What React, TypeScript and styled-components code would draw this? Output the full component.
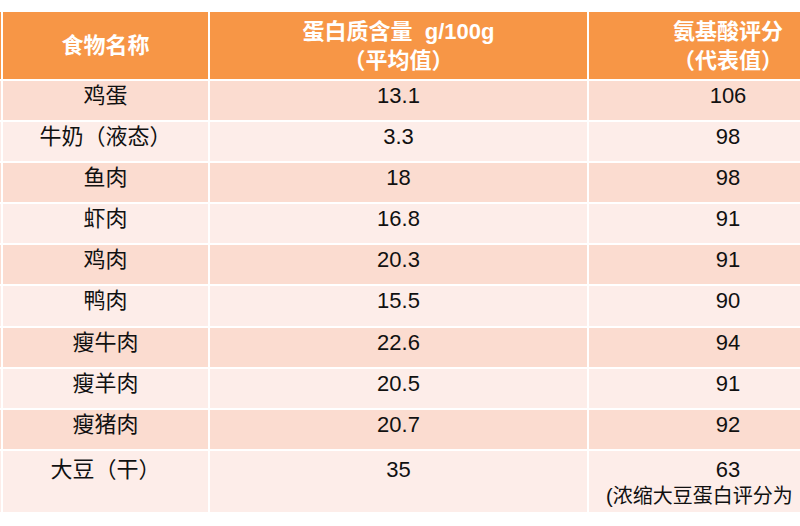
import React from "react";
import styled, { createGlobalStyle } from "styled-components";

const Global = createGlobalStyle`
  html, body { margin: 0; padding: 0; background: #ffffff; overflow: hidden; }
  body { width: 800px; height: 526px; }
`;

const Frame = styled.div`
  width: 800px;
  height: 526px;
  overflow: hidden;
  padding-top: 10px;
  box-sizing: border-box;
`;

const Table = styled.table`
  margin-left: -101px;
  border-collapse: separate;
  border-spacing: 2px;
  table-layout: fixed;
  width: 968px;
  background: #ffffff;
  font-family: "Liberation Sans", "Noto Sans CJK SC", sans-serif;
  font-size: 22px;
`;

const HeadCell = styled.th`
  height: 67px;
  padding: 0;
  background: #f79646;
  color: #ffffff;
  font-weight: 700;
  line-height: 29px;
  text-align: center;
  vertical-align: middle;
`;

const Cell = styled.td<{ $shade: boolean; $tall?: boolean }>`
  height: ${(p) => (p.$tall ? "61px" : "39.1px")};
  padding: ${(p) => (p.$tall ? "5px 0 0" : "1px 0 0")};
  box-sizing: border-box;
  background: ${(p) => (p.$shade ? "#fbdcd0" : "#fdede9")};
  color: #111111;
  line-height: 27px;
  text-align: center;
  vertical-align: top;
  white-space: nowrap;
  overflow: hidden;
`;

const Note = styled.div`
  text-align: left;
  padding-left: 17px;
  font-size: 20px;
`;

const rows: [string, string, string][] = [
  ["鸡蛋", "13.1", "106"],
  ["牛奶（液态）", "3.3", "98"],
  ["鱼肉", "18", "98"],
  ["虾肉", "16.8", "91"],
  ["鸡肉", "20.3", "91"],
  ["鸭肉", "15.5", "90"],
  ["瘦牛肉", "22.6", "94"],
  ["瘦羊肉", "20.5", "91"],
  ["瘦猪肉", "20.7", "92"],
];

export default function App() {
  return (
    <Frame>
      <Global />
      <Table>
        <colgroup>
          <col style={{ width: 100 }} />
          <col style={{ width: 205 }} />
          <col style={{ width: 377 }} />
          <col style={{ width: 278 }} />
        </colgroup>
        <thead>
          <tr>
            <HeadCell />
            <HeadCell>食物名称</HeadCell>
            <HeadCell>
              蛋白质含量&nbsp;&nbsp;g/100g
              <br />
              （平均值）
            </HeadCell>
            <HeadCell>
              氨基酸评分
              <br />
              （代表值）
            </HeadCell>
          </tr>
        </thead>
        <tbody>
          {rows.map((r, i) => (
            <tr key={r[0]}>
              <Cell $shade={i % 2 === 0} />
              <Cell $shade={i % 2 === 0}>{r[0]}</Cell>
              <Cell $shade={i % 2 === 0}>{r[1]}</Cell>
              <Cell $shade={i % 2 === 0}>{r[2]}</Cell>
            </tr>
          ))}
          <tr>
            <Cell $shade={false} $tall />
            <Cell $shade={false} $tall>大豆（干）</Cell>
            <Cell $shade={false} $tall>35</Cell>
            <Cell $shade={false} $tall>
              63
              <Note>(浓缩大豆蛋白评分为</Note>
            </Cell>
          </tr>
        </tbody>
      </Table>
    </Frame>
  );
}
